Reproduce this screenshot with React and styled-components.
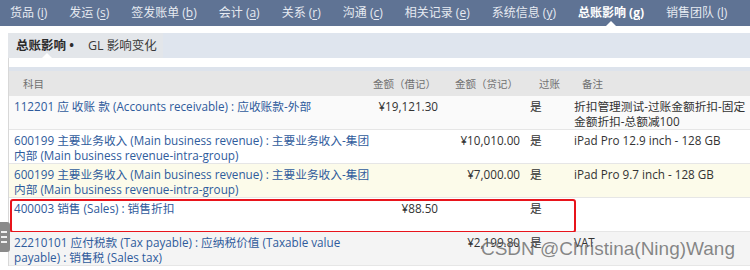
import React from "react"
import styled, { createGlobalStyle } from "styled-components"

const GlobalStyle = createGlobalStyle`
  body {
    margin: 0;
    background: #ffffff;
    font-family: "Open Sans", "Noto Sans CJK SC", sans-serif;
  }
`

const Page = styled.div`
  position: relative;
  width: 750px;
  height: 270px;
  overflow: hidden;
  background: #fff;
`

const NavBar = styled.div`
  height: 26px;
  background: #5f7394;
  display: flex;
  align-items: center;
  padding-left: 10px;
  gap: 22px;
`

const NavItem = styled.div`
  position: relative;
  height: 26px;
  line-height: 26px;
  font-size: 12px;
  white-space: nowrap;
  color: ${p => (p.active ? "#ffffff" : "#e6eaf1")};
  font-weight: ${p => (p.active ? 700 : 400)};

  u {
    text-decoration-thickness: 1px;
    text-underline-offset: 2px;
  }

  ${p => p.active && `
    &::after {
      content: "";
      position: absolute;
      left: 50%;
      bottom: 0;
      margin-left: -5px;
      border: 5px solid transparent;
      border-bottom-color: #ffffff;
      border-top: 0;
    }
  `}
`

const SubBar = styled.div`
  margin: 7px 0 0 8px;
  height: 25px;
  background: #dfe5ee;
  display: flex;
`

const TabGroup = styled.div`
  width: 155px;
  background: #e3e6ea;
  display: flex;
  align-items: center;
  padding-left: 8px;
  gap: 14px;
  box-sizing: border-box;
`

const SubTab = styled.div`
  position: relative;
  height: 25px;
  line-height: 25px;
  font-size: 12.5px;
  color: ${p => (p.active ? "#2b2b2b" : "#3a3a3a")};
  font-weight: ${p => (p.active ? 700 : 400)};
  white-space: nowrap;

  ${p => p.active && `
    &::after {
      content: "";
      position: absolute;
      left: 26px;
      bottom: 0;
      border: 5px solid transparent;
      border-bottom-color: #ffffff;
      border-top: 0;
    }
  `}
`

const Panel = styled.div`
  margin-left: 8px;
  border-left: 1px solid #d8d8d8;
  padding-top: 9px;
`

const TopBand = styled.div`
  height: 4px;
  background: #dde3ec;
`

const Grid = styled.div`
  display: grid;
  grid-template-columns: 362px 74px 82px 44px 1fr;
`

const HeadRow = styled(Grid)`
  height: 25px;
  background: #e6e6e6;
  align-items: center;
  font-size: 10.5px;
  color: #707070;
`

const HeadCell = styled.div`
  padding-left: ${p => p.pad}px;
  white-space: nowrap;
`

const Row = styled(Grid)`
  position: relative;
  min-height: 34px;
  box-sizing: border-box;
  background: ${p => p.bg};
  border-bottom: 1px solid #e6e6e6;
  font-size: 11.7px;
  line-height: 15px;
  color: #333;
`

const Cell = styled.div`
  padding: 3px 0 0 3px;
  text-align: ${p => (p.right ? "right" : "left")};
  padding-right: ${p => (p.right ? 7 : 0)}px;
  white-space: ${p => (p.right ? "nowrap" : "normal")};
`

const AccountLink = styled.a`
  color: #2f5b9c;
  text-decoration: none;
  display: block;
  padding-left: 2px;
`

const Highlight = styled.div`
  position: absolute;
  left: 1px;
  top: 1px;
  width: 566px;
  height: 34px;
  border: 2px solid #e8141b;
  border-radius: 3px;
  box-sizing: border-box;
  pointer-events: none;
`

const Watermark = styled.div`
  position: absolute;
  right: 15px;
  bottom: 10px;
  font-family: "Liberation Sans", Arial, sans-serif;
  font-size: 19px;
  color: rgba(90, 90, 90, 0.72);
`

const SideHandle = styled.div`
  position: absolute;
  left: 0;
  top: 222px;
  width: 10px;
  height: 30px;
  background: #8a8a8a;
  border-radius: 0 3px 3px 0;
  display: flex;
  flex-direction: column;
  justify-content: center;
  gap: 3px;
  padding-left: 1px;
  box-sizing: border-box;

  span {
    display: block;
    width: 6px;
    height: 2px;
    background: #f0f0f0;
  }
`

const tabs = [
  ["货品", "i"],
  ["发运", "s"],
  ["签发账单", "b"],
  ["会计", "a"],
  ["关系", "r"],
  ["沟通", "c"],
  ["相关记录", "e"],
  ["系统信息", "y"],
  ["总账影响", "g"],
  ["销售团队", "l"],
]

const rows = [
  {
    bg: "#fafafa",
    account: "112201 应 收账 款 (Accounts receivable) : 应收账款-外部",
    debit: "¥19,121.30",
    credit: "",
    memo: "折扣管理测试-过账金额折扣-固定金额折扣-总额减100",
  },
  {
    bg: "#ffffff",
    account: "600199 主要业务收入 (Main business revenue) : 主要业务收入-集团内部 (Main business revenue-intra-group)",
    debit: "",
    credit: "¥10,010.00",
    memo: "iPad Pro 12.9 inch - 128 GB",
  },
  {
    bg: "#fcfbea",
    account: "600199 主要业务收入 (Main business revenue) : 主要业务收入-集团内部 (Main business revenue-intra-group)",
    debit: "",
    credit: "¥7,000.00",
    memo: "iPad Pro 9.7 inch - 128 GB",
  },
  {
    bg: "#ffffff",
    account: "400003 销售 (Sales) : 销售折扣",
    debit: "¥88.50",
    credit: "",
    memo: "",
    marked: true,
  },
  {
    bg: "#f4f4f4",
    account: "22210101 应付税款 (Tax payable) : 应纳税价值 (Taxable value payable) : 销售税 (Sales tax)",
    debit: "",
    credit: "¥2,199.80",
    memo: "VAT",
  },
]

const App = () => (
  <Page>
    <GlobalStyle />
    <NavBar>
      {tabs.map(([label, key]) => (
        <NavItem key={key} active={key === "g"}>
          {label} (<u>{key}</u>)
        </NavItem>
      ))}
    </NavBar>
    <SubBar>
      <TabGroup>
        <SubTab active>总账影响 •</SubTab>
        <SubTab>GL 影响变化</SubTab>
      </TabGroup>
    </SubBar>
    <Panel>
      <TopBand />
      <HeadRow>
        <HeadCell pad={14}>科目</HeadCell>
        <HeadCell pad={2}>金额（借记）</HeadCell>
        <HeadCell pad={10}>金额（贷记）</HeadCell>
        <HeadCell pad={12}>过账</HeadCell>
        <HeadCell pad={11}>备注</HeadCell>
      </HeadRow>
      {rows.map((r, i) => (
        <Row key={i} bg={r.bg}>
          <Cell>
            <AccountLink href="#">{r.account}</AccountLink>
          </Cell>
          <Cell right>{r.debit}</Cell>
          <Cell right>{r.credit}</Cell>
          <Cell>是</Cell>
          <Cell>{r.memo}</Cell>
          {r.marked && <Highlight />}
        </Row>
      ))}
    </Panel>
    <SideHandle>
      <span />
      <span />
      <span />
    </SideHandle>
    <Watermark>CSDN @Christina(Ning)Wang</Watermark>
  </Page>
)

export default App
